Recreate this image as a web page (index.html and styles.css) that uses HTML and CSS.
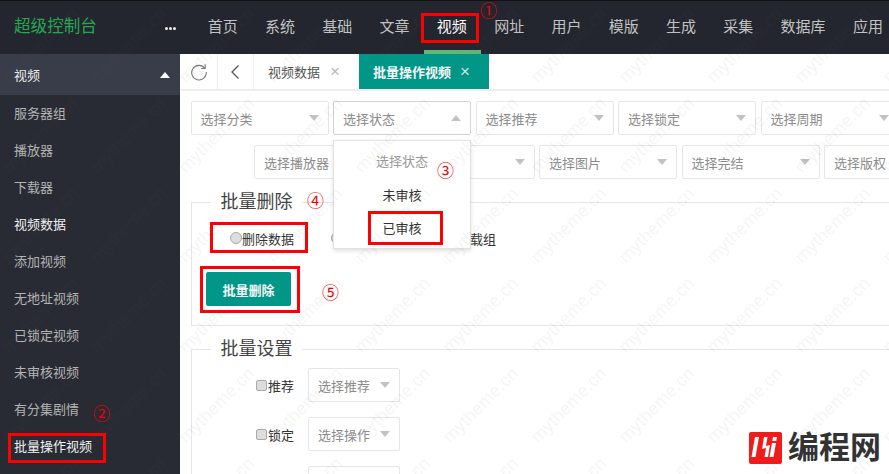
FILE: index.html
```html
<!DOCTYPE html>
<html lang="zh-CN">
<head>
  <meta charset="UTF-8">
  <title>超级控制台</title>
  <link rel="stylesheet" href="styles.css">
</head>
<body>
  <div class="page">
    <!-- 顶部导航 -->
    <header class="top">
      <div class="brand">超级控制台</div>
      <div class="dots"><i></i><i></i><i></i></div>
      <nav class="nav">
        <a>首页</a><a>系统</a><a>基础</a><a>文章</a><a class="on">视频</a><a>网址</a><a>用户</a><a>模版</a><a>生成</a><a>采集</a><a>数据库</a><a>应用</a>
      </nav>
    </header>

    <div class="body">
      <!-- 左侧菜单 -->
      <aside class="side">
        <div class="side-title">视频<i class="caret-up"></i></div>
        <a>服务器组</a>
        <a>播放器</a>
        <a>下载器</a>
        <a class="lit">视频数据</a>
        <a>添加视频</a>
        <a>无地址视频</a>
        <a>已锁定视频</a>
        <a>未审核视频</a>
        <a>有分集剧情</a>
        <a class="lit">批量操作视频</a>
      </aside>

      <main class="main">
        <div class="tabs">
          <div class="tab-btn">
            <svg width="18" height="18" viewBox="0 0 18 18" fill="none" stroke="#777" stroke-width="1.1"><path d="M14.8 5.2A7.3 7.3 0 1 0 16.3 9"/><path d="M15.2 1.2v4.3h-4.3"/></svg>
          </div>
          <div class="tab-btn">
            <svg width="10" height="16" viewBox="0 0 10 16" fill="none" stroke="#555" stroke-width="1.3"><path d="M8.5 1.5 2 8l6.5 6.5"/></svg>
          </div>
          <div class="tab">视频数据<span class="x">×</span></div>
          <div class="tab active">批量操作视频<span class="x">×</span></div>
        </div>

        <div class="filters">
          <div class="sel">选择分类<i class="caret"></i></div>
          <div class="sel open">选择状态<i class="caret-up grey"></i></div>
          <div class="sel">选择推荐<i class="caret"></i></div>
          <div class="sel">选择锁定<i class="caret"></i></div>
          <div class="sel">选择周期<i class="caret"></i></div>
        </div>
        <div class="filters second">
          <div class="sel">选择播放器<i class="caret"></i></div>
          <div class="sel"><i class="caret push"></i></div>
          <div class="sel">选择图片<i class="caret"></i></div>
          <div class="sel">选择完结<i class="caret"></i></div>
          <div class="sel">选择版权<i class="caret"></i></div>
        </div>

        <fieldset class="box del">
          <legend>批量删除</legend>
          <div class="radios">
            <label><input type="radio" name="act">删除数据</label>
            <label class="under"><input type="radio" name="act"><span class="tail">载组</span></label>
          </div>
          <button class="btn">批量删除</button>
        </fieldset>

        <fieldset class="box set">
          <legend>批量设置</legend>
          <div class="set-row">
            <label><input type="checkbox">推荐</label>
            <div class="sel small">选择推荐<i class="caret"></i></div>
          </div>
          <div class="set-row">
            <label><input type="checkbox">锁定</label>
            <div class="sel small">选择操作<i class="caret"></i></div>
          </div>
          <div class="set-row">
            <div class="sel small blank"></div>
          </div>
        </fieldset>

        <!-- 展开的下拉框 -->
        <ul class="drop">
          <li class="tip">选择状态</li>
          <li>未审核</li>
          <li>已审核</li>
        </ul>
      </main>
    </div>

    <!-- 标注层 -->
    <div class="mark m-nav"></div>
    <div class="mark m-side"></div>
    <div class="mark m-opt"></div>
    <div class="mark m-radio"></div>
    <div class="mark m-btn"></div>
    <span class="num n1">①</span>
    <span class="num n2">②</span>
    <span class="num n3">③</span>
    <span class="num n4">④</span>
    <span class="num n5">⑤</span>

    <!-- 水印 -->
    <svg class="wm" width="889" height="474">
      <defs>
        <pattern id="wmTile" width="88" height="90" patternUnits="userSpaceOnUse">
          <text transform="translate(10 84) rotate(-45)" class="wm-text">mytheme.cn</text>
        </pattern>
      </defs>
      <rect width="889" height="474" fill="url(#wmTile)"/>
    </svg>

    <div class="stamp">
      <svg width="33" height="32" viewBox="0 0 33 32"><rect width="33" height="32" rx="2" fill="#f01c1c"/><path d="M6 5h4L6.500 25h-4zM15 5h3.500L17 14l4-1-2 12h-3.500l1.600-9-4 1zM24 5h4l-.7 4h-4zM23 11h4l-2.500 14h-4z" fill="#fff"/></svg>
      <span>编程网</span>
    </div>
  </div>
</body>
</html>
```
FILE: styles.css
```css
* { box-sizing: border-box; }
html, body { margin: 0; height: 100%; }
body {
  font-family: "Liberation Sans", "Noto Sans CJK SC", sans-serif;
  font-size: 13px;
  color: #333;
  background: #fff;
}
.page {
  position: relative;
  width: 889px;
  height: 474px;
  overflow: hidden;
}

/* 顶部 */
.top {
  display: flex;
  height: 54px;
  background: #23262e;
  border-top: 1px solid #111;
  color: #c2c2c2;
}
.brand {
  width: 165px;
  flex: none;
  padding-left: 14px;
  font-size: 16.600px;
  line-height: 52px;
  color: #22a94f;
}
.dots {
  display: flex;
  flex: none;
  width: 29px;
  gap: 1px;
  padding-top: 26px;
}
.dots i {
  width: 3px;
  height: 3px;
  border-radius: 50%;
  background: #eee;
}
.nav { display: flex; white-space: nowrap; }
.nav a {
  position: relative;
  padding: 0 13.650px;
  font-size: 15px;
  line-height: 51px;
}
.nav a.on { color: #fff; }
.nav a.on::after {
  content: "";
  position: absolute;
  left: 1px;
  right: -1px;
  bottom: 0;
  height: 4px;
  background: #5fb878;
}

.body { display: flex; height: 420px; }

/* 左侧 */
.side {
  width: 180px;
  flex: none;
  background: #282b33;
  color: #b4b4b4;
}
.side-title {
  display: flex;
  align-items: center;
  justify-content: space-between;
  height: 41px;
  padding: 0 10px 0 14px;
  background: #393d49;
  color: #eee;
}
.side a {
  display: block;
  height: 37px;
  padding-left: 14px;
  line-height: 37px;
}
.side a.lit { color: #f2f2f2; }

.caret-up {
  width: 0;
  height: 0;
  border: 5.500px solid transparent;
  border-top: 0;
  border-bottom: 6px solid #fff;
}
.caret-up.grey { border-bottom-color: #c2c2c2; }
.caret {
  width: 0;
  height: 0;
  border: 5.500px solid transparent;
  border-bottom: 0;
  border-top: 6px solid #c2c2c2;
}
.caret.push { margin-left: auto; }

/* 标签栏 */
.main {
  position: relative;
  flex: 1;
  min-width: 0;
  overflow: hidden;
  padding-left: 1px;
}
.tabs {
  display: flex;
  height: 37px;
  border-bottom: 2px solid #eee;
  color: #555;
}
.tab-btn {
  display: flex;
  align-items: center;
  justify-content: center;
  width: 36.500px;
  border-right: 1px solid #eee;
}
.tab {
  display: flex;
  align-items: center;
  width: 105px;
  padding-left: 14px;
}
.tab .x {
  margin-left: 10px;
  font-size: 17px;
  line-height: 1;
  color: #bbb;
}
.tab.active {
  width: 130px;
  background: #009688;
  color: #f6f6f6;
  font-weight: bold;
}
.tab.active .x { margin-left: 9px; font-weight: normal; color: #cde8e4; }

/* 筛选 */
.filters {
  display: flex;
  gap: 4.500px;
  margin: 10px 0 0 9.500px;
  width: 800px;
}
.filters.second { padding-left: 63.500px; width: 860px; }
.sel {
  display: flex;
  flex: none;
  align-items: center;
  justify-content: space-between;
  width: 138px;
  height: 34px;
  padding: 0 9px;
  border: 1px solid #e6e6e6;
  border-radius: 2px;
  color: #8c8c8c;
}
.sel.open { border-color: #d2d2d2; }
.sel.small { width: 92px; }

/* 表单分组 */
.box {
  width: 760px;
  margin: 0 0 0 10px;
  padding: 0;
  border: 1px solid #e6e6e6;
  border-width: 1px 0 1px 1px;
}
.box legend {
  margin-left: 19px;
  padding: 0 9.500px;
  font-size: 18px;
  line-height: 24px;
  color: #444;
}
.del { margin-top: 11px; height: 136px; }
.radios {
  display: flex;
  gap: 37px;
  height: 20px;
  margin: 14px 0 0 38px;
  align-items: center;
}
.radios label { display: flex; align-items: center; color: #333; }
.radios .under { width: 165px; }
.radios .tail { margin-left: auto; }
.radios input {
  appearance: none;
  width: 12px;
  height: 12px;
  margin: 0;
  border: 1px solid #aaa;
  border-radius: 50%;
  background: #ddd;
}
.btn {
  display: block;
  width: 85px;
  height: 34px;
  margin: 24px 0 0 14px;
  border: 0;
  border-radius: 2px;
  background: #009688;
  color: #f4f4f4;
  font: bold 13px "Liberation Sans", "Noto Sans CJK SC", sans-serif;
}
.set { margin-top: 11px; height: 200px; border-bottom: 0; }
.set-row {
  display: flex;
  align-items: center;
  height: 34px;
  margin: 7px 0 15px;
}
.set-row label {
  display: flex;
  align-items: center;
  justify-content: flex-end;
  width: 102px;
  margin-right: 14px;
}
.set-row .blank { margin-left: 116px; }
.set-row input {
  appearance: none;
  width: 11px;
  height: 11px;
  margin: 0 1px 0 0;
  border: 1px solid #aaa;
  border-radius: 2px;
  background: #ddd;
}

/* 下拉 */
.drop {
  position: absolute;
  left: 153px;
  top: 86px;
  width: 138px;
  height: 109px;
  margin: 0;
  padding: 4px 0;
  list-style: none;
  background: #fff;
  border: 1px solid #e2e2e2;
  box-shadow: 0 2px 4px rgba(0, 0, 0, .12);
  text-align: center;
}
.drop li { height: 33.500px; line-height: 33.500px; color: #333; }
.drop li.tip { color: #999; }

/* 红色标注 */
.mark {
  position: absolute;
  border: 3px solid #f00;
}
.m-nav { left: 421px; top: 13px; width: 58px; height: 30px; }
.m-side { left: 8px; top: 433px; width: 98px; height: 30px; }
.m-opt { left: 368px; top: 211px; width: 75px; height: 34px; }
.m-radio { left: 210px; top: 222px; width: 98px; height: 31px; }
.m-btn { left: 200px; top: 266px; width: 100px; height: 47px; }
.num {
  position: absolute;
  font-size: 17px;
  line-height: 18px;
  color: #e00;
}
.n1 { left: 480px; top: 3px; }
.n2 { left: 93px; top: 406px; }
.n3 { left: 437px; top: 163px; }
.n4 { left: 307px; top: 193px; }
.n5 { left: 322px; top: 285px; }

/* 水印 */
.wm {
  position: absolute;
  left: 0;
  top: 0;
  pointer-events: none;
}
.wm-text {
  font-family: "Liberation Sans", sans-serif;
  font-size: 18px;
  fill: rgba(90, 90, 90, .06);
}
.stamp {
  position: absolute;
  left: 749px;
  top: 432px;
  display: flex;
  align-items: center;
  gap: 6px;
  height: 32px;
  color: #333;
  font-size: 31px;
  font-weight: bold;
  line-height: 32px;
}
```
